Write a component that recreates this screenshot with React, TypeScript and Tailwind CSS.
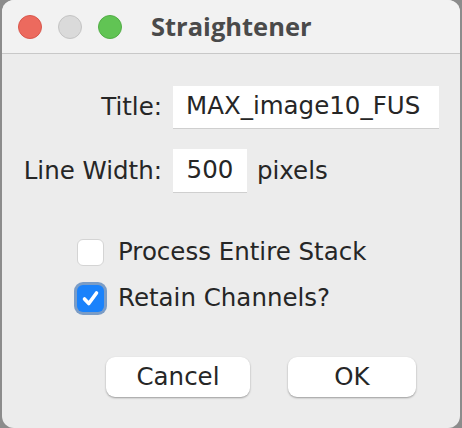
export default function App() {
  return (
    <div className="w-[462px] h-[428px] bg-[#8c8c8c] overflow-hidden" style={{ fontFamily: '"DejaVu Sans", sans-serif' }}>
      <div className="ml-[2px] w-[458px] h-[428px] rounded-[12px] bg-[#ececec] overflow-hidden flex flex-col text-[#262626]">
        {/* title bar */}
        <div className="h-[54px] bg-[#f2f2f2] border-b border-[#c8c8c8] flex items-center relative">
          <div className="flex items-center gap-[16px] pl-[16px]">
            <span className="w-[24px] h-[24px] rounded-full bg-[#ec6a5e] border border-[#d9574c]" />
            <span className="w-[24px] h-[24px] rounded-full bg-[#dadada] border border-[#c4c4c4]" />
            <span className="w-[24px] h-[24px] rounded-full bg-[#61c454] border border-[#52ad46]" />
          </div>
          <span className="ml-[29px] text-[25.5px] font-bold text-[#4a4a4a]" style={{ fontFamily: '"Open Sans", sans-serif' }}>
            Straightener
          </span>
        </div>

        {/* fields */}
        <div className="flex flex-col pt-[31px] pl-[20px] text-[24.5px] leading-none">
          <div className="flex items-center h-[44px]">
            <span className="w-[140px] text-right whitespace-nowrap">Title:</span>
            <div className="ml-[11px] w-[266px] h-[43px] bg-white border-b border-[#cfcfcf] flex items-center px-[13px] whitespace-nowrap">
              MAX_image10_FUS
            </div>
          </div>
          <div className="flex items-center h-[44px] mt-[20px]">
            <span className="w-[140px] text-right whitespace-nowrap">Line Width:</span>
            <div className="ml-[11px] w-[74px] h-[44px] bg-white border-b border-[#cfcfcf] flex items-center justify-center">
              500
            </div>
            <span className="ml-[10px]">pixels</span>
          </div>
        </div>

        {/* checkboxes */}
        <div className="flex flex-col pl-[75px] mt-[46px] gap-[19px] text-[24.5px] leading-none">
          <label className="flex items-center gap-[14px] h-[27px]">
            <span className="w-[27px] h-[27px] rounded-[6px] bg-white border border-[#d4d4d4]" />
            <span>Process Entire Stack</span>
          </label>
          <label className="flex items-center gap-[14px] h-[27px]">
            <span className="w-[27px] h-[27px] rounded-[6px] bg-[#1a82fb] ring-[3px] ring-[#7a9cc6] flex items-center justify-center">
              <svg width="21" height="21" viewBox="0 0 21 21" fill="none">
                <path d="M4.5 11 L8.8 15.5 L16.5 5" stroke="white" strokeWidth="3.6" strokeLinecap="round" strokeLinejoin="round" />
              </svg>
            </span>
            <span>Retain Channels?</span>
          </label>
        </div>

        {/* buttons */}
        <div className="flex pl-[104px] mt-[45px] gap-[38px] text-[24.5px] leading-none">
          <button className="w-[144px] h-[40px] rounded-[9px] bg-white shadow-[0_1px_2px_rgba(0,0,0,0.35)] flex items-center justify-center">
            Cancel
          </button>
          <button className="w-[128px] h-[40px] rounded-[9px] bg-white shadow-[0_1px_2px_rgba(0,0,0,0.35)] flex items-center justify-center">
            OK
          </button>
        </div>
      </div>
    </div>
  );
}
